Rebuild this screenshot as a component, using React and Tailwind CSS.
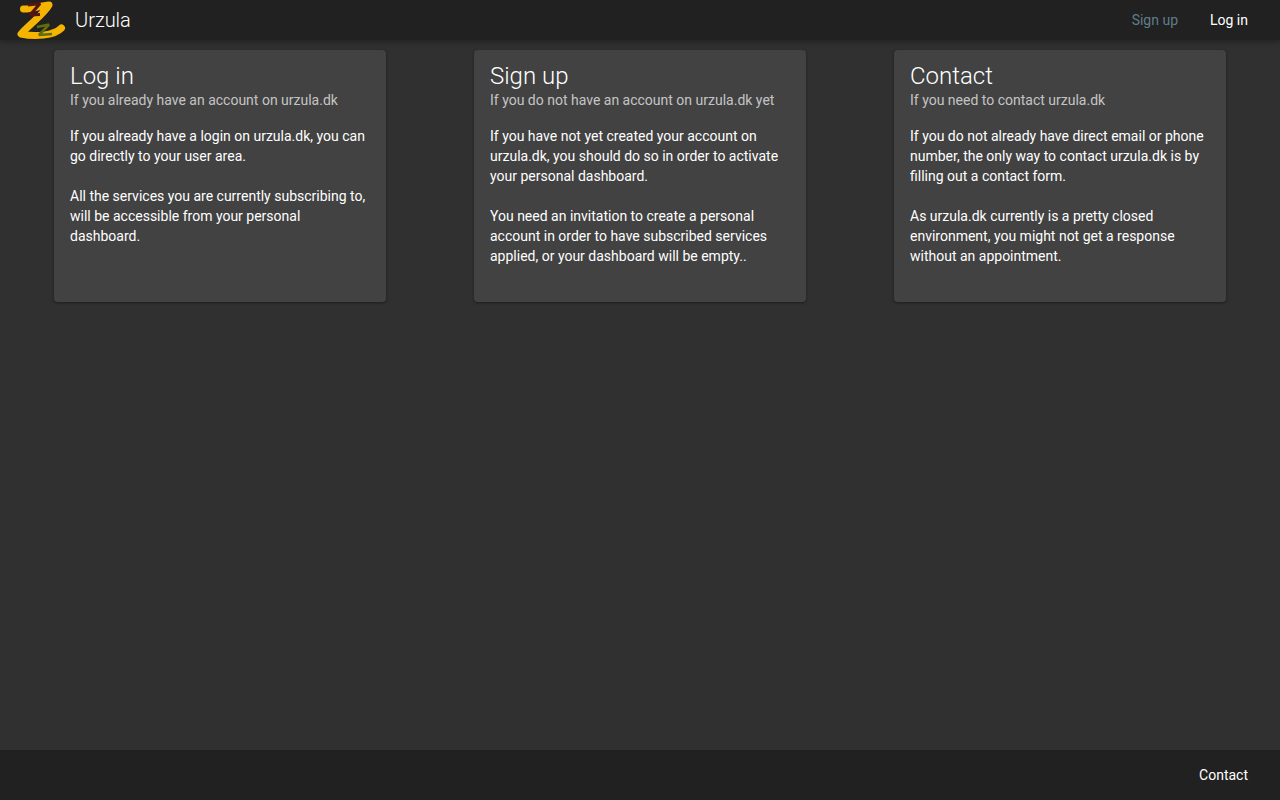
const cards = [
  {
    title: "Log in",
    sub: "If you already have an account on urzula.dk",
    body: [
      "If you already have a login on urzula.dk, you can go directly to your user area.",
      "All the services you are currently subscribing to, will be accessible from your personal dashboard.",
    ],
  },
  {
    title: "Sign up",
    sub: "If you do not have an account on urzula.dk yet",
    body: [
      "If you have not yet created your account on urzula.dk, you should do so in order to activate your personal dashboard.",
      "You need an invitation to create a personal account in order to have subscribed services applied, or your dashboard will be empty..",
    ],
  },
  {
    title: "Contact",
    sub: "If you need to contact urzula.dk",
    body: [
      "If you do not already have direct email or phone number, the only way to contact urzula.dk is by filling out a contact form.",
      "As urzula.dk currently is a pretty closed environment, you might not get a response without an appointment.",
    ],
  },
];

function Logo() {
  return (
    <svg width="50" height="40" viewBox="0 0 50 40" fill="none" className="shrink-0">
      <path
        d="M7.5 9 C14 9.5 24 6 33 5 C28 14 14 24 5 34 C18 37 38 36 45.5 28"
        stroke="#f5b400"
        strokeWidth="7"
        strokeLinecap="round"
        strokeLinejoin="round"
      />
      <path d="M12 5 L24 3.5 L14 15 L24 14.5" stroke="#561414" strokeWidth="3.2" strokeLinejoin="bevel" />
      <path d="M21 27 L33 24.5 L23 35 L36 34" stroke="#5f6d0c" strokeWidth="2.6" strokeLinejoin="bevel" />
    </svg>
  );
}

export default function App() {
  return (
    <div className="flex h-screen flex-col bg-[#303030] font-['Roboto',sans-serif] text-sm text-white">
      <header className="z-10 flex h-10 shrink-0 items-center justify-between bg-[#212121] pl-4 pr-4 shadow-[0_2px_5px_rgba(0,0,0,0.3)]">
        <div className="flex items-center">
          <Logo />
          <span className="ml-[9px] text-xl font-light">Urzula</span>
        </div>
        <nav className="flex items-center">
          <a className="px-4 text-[#607d8b]">Sign up</a>
          <a className="px-4 text-white">Log in</a>
        </nav>
      </header>

      <main className="grid flex-1 grid-cols-3 content-start px-[10px] pt-[10px]">
        {cards.map((card) => (
          <section
            key={card.title}
            className="mx-[44px] flex h-[252px] flex-col rounded bg-[#424242] p-4 pt-3 shadow-[0_1px_3px_rgba(0,0,0,0.4)]"
          >
            <h2 className="text-2xl leading-[28px] font-light">{card.title}</h2>
            <p className="leading-5 text-white/70">{card.sub}</p>
            <div className="mt-4 leading-5">
              <p>{card.body[0]}</p>
              <p className="mt-5">{card.body[1]}</p>
            </div>
          </section>
        ))}
      </main>

      <footer className="flex h-[50px] shrink-0 items-center justify-end bg-[#212121] px-4">
        <a className="px-4">Contact</a>
      </footer>
    </div>
  );
}
